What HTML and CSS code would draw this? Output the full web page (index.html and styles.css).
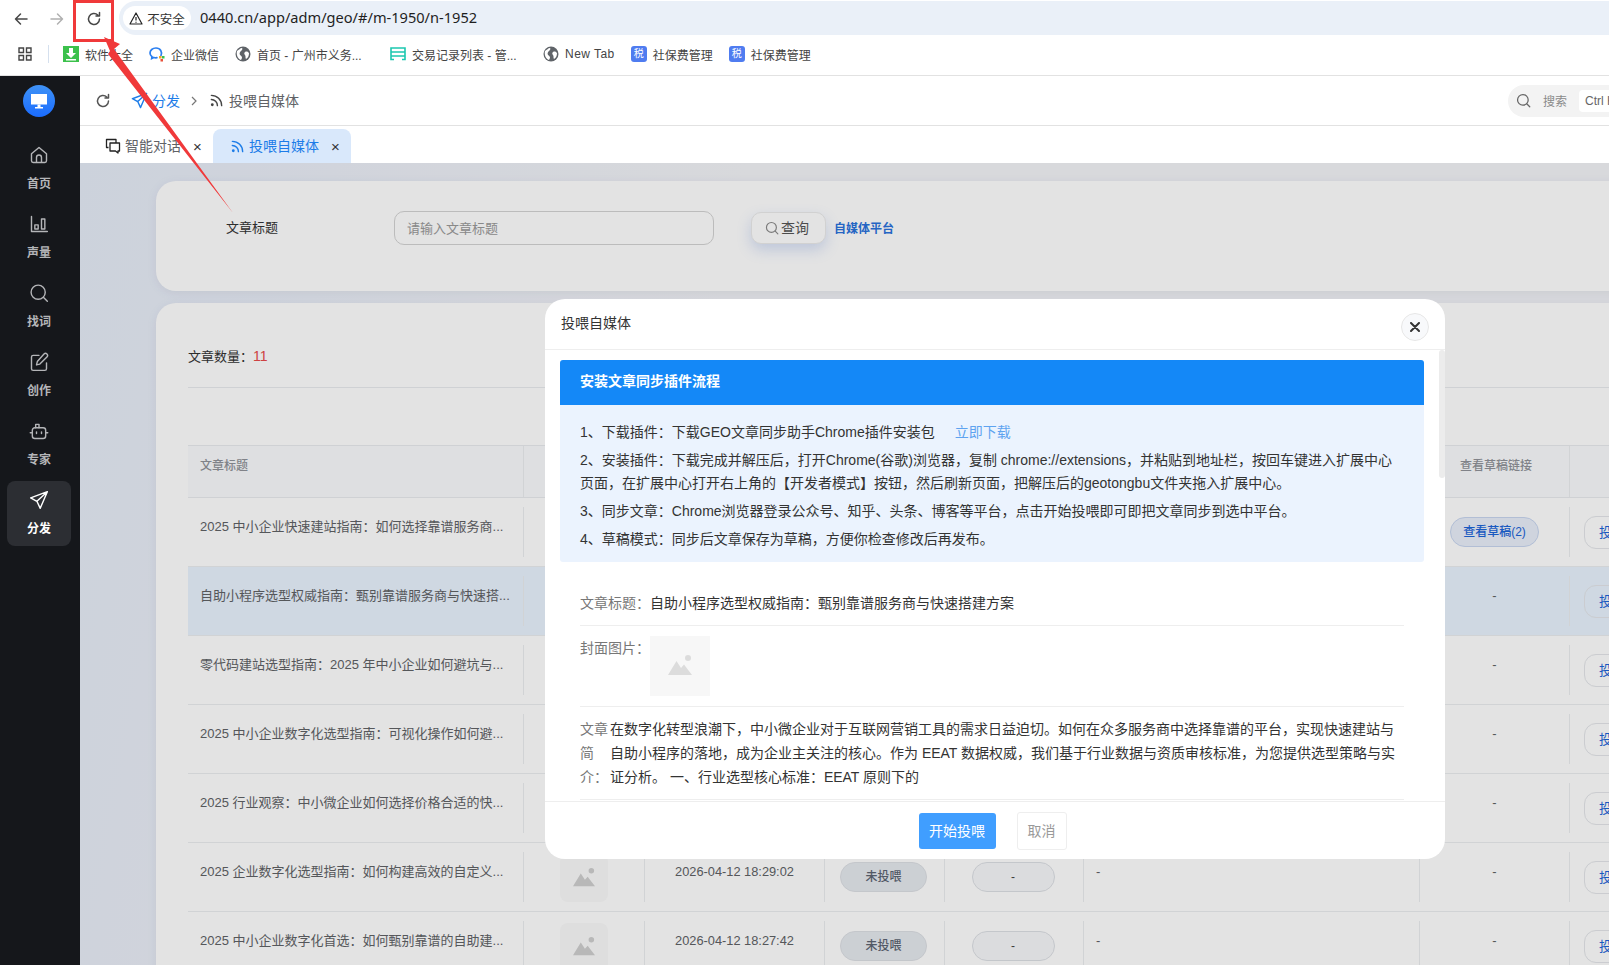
FILE: index.html
```html
<!DOCTYPE html>
<html lang="zh-CN">
<head>
    <meta charset="UTF-8">
    <meta name="viewport" content="width=device-width, initial-scale=1.0">
    <title>投喂自媒体</title>
    <link rel="stylesheet" href="styles.css">
</head>
<body>
    <svg class="defs" width="0" height="0">
        <symbol id="i-globe" viewBox="0 0 16 16">
            <circle cx="8" cy="8" r="7.5" fill="#5f6368"/>
            <path d="M2 5c2-1 3-3 5-3 1 1 0 2-1 3S4 7 5 9c1 1 2 1 2 3l-1 2C3 13 1 9 2 5zM10 6c2-1 3 0 4 1 0 3-1 5-3 6-1-1 0-3-1-4s-1-2 0-3z" fill="#fff"/>
        </symbol>
        <symbol id="i-rss" viewBox="0 0 16 16">
            <path d="M2.5 7a6.5 6.5 0 0 1 6.500 6.500M2.500 2.500a11 11 0 0 1 11 11" fill="none" stroke="currentColor" stroke-width="1.500" stroke-linecap="round"/>
            <circle cx="3.500" cy="12.500" r="1.500" fill="currentColor"/>
        </symbol>
        <symbol id="i-send" viewBox="0 0 24 24">
            <path d="M22 2 2 9.500l7.500 4L13.500 22z M22 2 9.500 13.500" fill="none" stroke="currentColor" stroke-width="2" stroke-linejoin="round" stroke-linecap="round"/>
        </symbol>
        <symbol id="i-reload" viewBox="0 0 16 16">
            <path d="M13.500 8a5.500 5.500 0 1 1-1.700-4M13.500 1.500V5H10" fill="none" stroke="currentColor" stroke-width="1.500" stroke-linecap="round" stroke-linejoin="round"/>
        </symbol>
        <symbol id="i-search" viewBox="0 0 24 24">
            <circle cx="11" cy="11" r="8.500" fill="none" stroke="currentColor" stroke-width="2"/>
            <path d="m17.500 17.500 4.500 4.500" fill="none" stroke="currentColor" stroke-width="2" stroke-linecap="round"/>
        </symbol>
        <symbol id="i-pic" viewBox="0 0 24 24">
            <path d="M0 21 8.500 7l4.500 7 3-3.500L24 21z" fill="currentColor"/>
            <circle cx="20" cy="4" r="3" fill="currentColor"/>
        </symbol>
    </svg>

    <div class="browser-bar">
        <svg class="nav-icon" viewBox="0 0 16 16"><path d="M14 8H2.500M7.500 3 2.500 8l5 5" fill="none" stroke="#474747" stroke-width="1.500" stroke-linecap="round" stroke-linejoin="round"/></svg>
        <svg class="nav-icon" viewBox="0 0 16 16"><path d="M2 8h11.500M8.500 3l5 5-5 5" fill="none" stroke="#b0b0b0" stroke-width="1.500" stroke-linecap="round" stroke-linejoin="round"/></svg>
        <svg class="nav-icon nav-reload"><use href="#i-reload"/></svg>
        <div class="address">
            <div class="not-secure">
                <svg width="14" height="13" viewBox="0 0 14 13"><path d="M7 1 13 12H1zM7 5v3.500M7 9.700v1" fill="none" stroke="#222" stroke-width="1.200" stroke-linejoin="round"/></svg>
                <span>不安全</span>
            </div>
            <span class="url">0440.cn/app/adm/geo/#/m-1950/n-1952</span>
        </div>
    </div>

    <div class="bookmarks">
        <svg class="bm-apps" viewBox="0 0 14 14"><path d="M1 1h4.500v4.500H1zM8.500 1H13v4.500H8.500zM1 8.500h4.500V13H1zM8.500 8.500H13V13H8.500z" fill="none" stroke="#444" stroke-width="1.400"/></svg>
        <i class="bm-sep"></i>
        <div class="bm bm-first">
            <svg class="bm-icon" viewBox="0 0 16 16"><rect width="16" height="16" fill="#3cc14c"/><path d="M6 2h4v5h3l-5 5-5-5h3zM3 13h10v1.500H3z" fill="#fff"/></svg>
            <span>软件大全</span>
        </div>
        <div class="bm">
            <svg class="bm-icon" viewBox="0 0 16 16"><path d="M12 9.500c1.500-3.500-.5-7.500-5-7.500C3.500 2 1 4.300 1 7c0 1.600.8 2.800 2 3.700l-.3 1.800 2.200-1c1 .3 2 .4 3 .2" fill="none" stroke="#2b7ff0" stroke-width="1.700" stroke-linecap="round"/><rect x="10" y="10" width="2.500" height="2.500" fill="#f5a623"/><rect x="13" y="10" width="2.500" height="2.500" fill="#3cc14c"/><rect x="11.500" y="13" width="2.500" height="2.500" fill="#e8503a"/></svg>
            <span>企业微信</span>
        </div>
        <div class="bm bm-long bm-wide">
            <svg class="bm-icon"><use href="#i-globe"/></svg>
            <span>首页 - 广州市义务...</span>
        </div>
        <div class="bm bm-long">
            <svg class="bm-icon" viewBox="0 0 16 16"><path d="M1 2h14v8H1zM1 6h14M1 10v3.500h3M15 10v3.500h-3" fill="none" stroke="#1cc8b0" stroke-width="1.600"/></svg>
            <span>交易记录列表 - 管...</span>
        </div>
        <div class="bm bm-latin">
            <svg class="bm-icon"><use href="#i-globe"/></svg>
            <span>New Tab</span>
        </div>
        <div class="bm">
            <b class="bm-tax">税</b>
            <span>社保费管理</span>
        </div>
        <div class="bm">
            <b class="bm-tax">税</b>
            <span>社保费管理</span>
        </div>
    </div>

    <div class="app">
        <aside class="sidebar">
            <div class="logo">
                <svg width="18" height="17" viewBox="0 0 18 17"><path d="M1 1h16v10.500H1z" fill="#fff"/><path d="M7.500 11.500h3V14h2.500v1.500H5V14h2.500z" fill="#fff"/></svg>
            </div>
            <a class="side-item">
                <svg viewBox="0 0 24 24"><path d="M3 10.500 12 3l9 7.500V19a2 2 0 0 1-2 2H5a2 2 0 0 1-2-2zM9 21v-6a3 3 0 0 1 6 0v6"/></svg>
                <span>首页</span>
            </a>
            <a class="side-item">
                <svg viewBox="0 0 24 24"><path d="M3 3v18h19M7 13h4v5H7zM15 6h4v12h-4z"/></svg>
                <span>声量</span>
            </a>
            <a class="side-item">
                <svg viewBox="0 0 24 24"><circle cx="11" cy="11" r="8.500"/><path d="m17.500 17.500 4.500 4.500"/></svg>
                <span>找词</span>
            </a>
            <a class="side-item">
                <svg viewBox="0 0 24 24"><path d="M12 4H5a2 2 0 0 0-2 2v14a2 2 0 0 0 2 2h14a2 2 0 0 0 2-2v-7M18 2.500a2.200 2.200 0 0 1 3.500 3.500L13 14.500l-4 1 1-4z"/></svg>
                <span>创作</span>
            </a>
            <a class="side-item">
                <svg viewBox="0 0 24 24"><rect x="4" y="8" width="16" height="13" rx="3"/><path d="M8 8V4h4v4M1.500 14H4M20 14h2.500M9 13v2M15 13v2"/></svg>
                <span>专家</span>
            </a>
            <a class="side-item active">
                <svg viewBox="0 0 24 24"><path d="M22 2 2 9.500l7.500 4L13.500 22zM22 2 9.500 13.500"/></svg>
                <span>分发</span>
            </a>
        </aside>

        <main class="main">
            <header class="topbar">
                <svg class="top-reload"><use href="#i-reload"/></svg>
                <svg class="crumb-send"><use href="#i-send"/></svg>
                <span class="crumb-link">分发</span>
                <svg class="crumb-arrow" viewBox="0 0 8 12"><path d="m2 2 4 4-4 4" fill="none" stroke="#777" stroke-width="1.200"/></svg>
                <svg class="crumb-rss"><use href="#i-rss"/></svg>
                <span class="crumb-current">投喂自媒体</span>
                <div class="top-search">
                    <svg><use href="#i-search"/></svg>
                    <span>搜索</span>
                    <kbd>Ctrl K</kbd>
                </div>
            </header>

            <nav class="tabs">
                <div class="tab">
                    <svg width="16" height="16" viewBox="0 0 16 16"><path d="M11 4.500V1.500H1.500v8h2M5 5h9.500v8h-1.500v2l-2.500-2H5z" fill="none" stroke="#222" stroke-width="1.300" stroke-linejoin="round"/></svg>
                    <span>智能对话</span>
                    <em>×</em>
                </div>
                <div class="tab tab-on">
                    <svg width="15" height="15"><use href="#i-rss"/></svg>
                    <span>投喂自媒体</span>
                    <em>×</em>
                </div>
            </nav>

            <section class="content">
                <div class="card search-card">
                    <label class="search-label">文章标题</label>
                    <div class="search-input">请输入文章标题</div>
                    <button class="search-btn">
                        <svg width="14" height="14"><use href="#i-search"/></svg><span>查询</span>
                    </button>
                    <a class="platform-link">自媒体平台</a>
                </div>

                <div class="card list-card">
                    <div class="count">文章数量：<b>11</b></div>
                    <div class="table">
                        <div class="row row-head">
                            <div class="cell">文章标题</div>
                            <div class="cell"></div>
                            <div class="cell"></div>
                            <div class="cell"></div>
                            <div class="cell"></div>
                            <div class="cell"></div>
                            <div class="cell cell-draft-head">查看草稿链接</div>
                            <div class="cell"></div>
                        </div>
                        <div class="row">
                            <div class="cell">2025 中小企业快速建站指南：如何选择靠谱服务商...</div>
                            <div class="cell"></div>
                            <div class="cell"></div>
                            <div class="cell"></div>
                            <div class="cell"></div>
                            <div class="cell"></div>
                            <div class="cell cell-draft"><a class="draft-pill">查看草稿(2)</a></div>
                            <div class="cell cell-act"><a class="feed-btn">投喂</a></div>
                        </div>
                        <div class="row row-on">
                            <div class="cell">自助小程序选型权威指南：甄别靠谱服务商与快速搭...</div>
                            <div class="cell"></div>
                            <div class="cell"></div>
                            <div class="cell"></div>
                            <div class="cell"></div>
                            <div class="cell"></div>
                            <div class="cell cell-mid">-</div>
                            <div class="cell cell-act"><a class="feed-btn">投喂</a></div>
                        </div>
                        <div class="row">
                            <div class="cell">零代码建站选型指南：2025 年中小企业如何避坑与...</div>
                            <div class="cell"></div>
                            <div class="cell"></div>
                            <div class="cell"></div>
                            <div class="cell"></div>
                            <div class="cell"></div>
                            <div class="cell cell-mid">-</div>
                            <div class="cell cell-act"><a class="feed-btn">投喂</a></div>
                        </div>
                        <div class="row">
                            <div class="cell">2025 中小企业数字化选型指南：可视化操作如何避...</div>
                            <div class="cell"></div>
                            <div class="cell"></div>
                            <div class="cell"></div>
                            <div class="cell"></div>
                            <div class="cell"></div>
                            <div class="cell cell-mid">-</div>
                            <div class="cell cell-act"><a class="feed-btn">投喂</a></div>
                        </div>
                        <div class="row">
                            <div class="cell">2025 行业观察：中小微企业如何选择价格合适的快...</div>
                            <div class="cell"></div>
                            <div class="cell"></div>
                            <div class="cell"></div>
                            <div class="cell"></div>
                            <div class="cell"></div>
                            <div class="cell cell-mid">-</div>
                            <div class="cell cell-act"><a class="feed-btn">投喂</a></div>
                        </div>
                        <div class="row">
                            <div class="cell">2025 企业数字化选型指南：如何构建高效的自定义...</div>
                            <div class="cell cell-thumb"><div class="thumb"><svg><use href="#i-pic"/></svg></div></div>
                            <div class="cell cell-mid cell-date">2026-04-12 18:29:02</div>
                            <div class="cell cell-pill"><span class="pill">未投喂</span></div>
                            <div class="cell cell-pill"><span class="pill pill-dash">-</span></div>
                            <div class="cell">-</div>
                            <div class="cell cell-mid">-</div>
                            <div class="cell cell-act"><a class="feed-btn">投喂</a></div>
                        </div>
                        <div class="row">
                            <div class="cell">2025 中小企业数字化首选：如何甄别靠谱的自助建...</div>
                            <div class="cell cell-thumb"><div class="thumb"><svg><use href="#i-pic"/></svg></div></div>
                            <div class="cell cell-mid cell-date">2026-04-12 18:27:42</div>
                            <div class="cell cell-pill"><span class="pill">未投喂</span></div>
                            <div class="cell cell-pill"><span class="pill pill-dash">-</span></div>
                            <div class="cell">-</div>
                            <div class="cell cell-mid">-</div>
                            <div class="cell cell-act"><a class="feed-btn">投喂</a></div>
                        </div>
                    </div>
                </div>

                <div class="mask"></div>

                <div class="modal">
                    <div class="modal-head">
                        <span>投喂自媒体</span>
                        <button class="modal-close">
                            <svg width="10" height="10" viewBox="0 0 10 10"><path d="m1 1 8 8M9 1 1 9" stroke="#333" stroke-width="2" stroke-linecap="round"/></svg>
                        </button>
                    </div>
                    <div class="modal-body">
                        <h3 class="guide-title">安装文章同步插件流程</h3>
                        <div class="guide">
                            <p>1、下载插件：下载GEO文章同步助手Chrome插件安装包<a class="guide-link">立即下载</a></p>
                            <p>2、安装插件：下载完成并解压后，打开Chrome(谷歌)浏览器，复制 chrome://extensions，并粘贴到地址栏，按回车键进入扩展中心<br>页面，在扩展中心打开右上角的【开发者模式】按钮，然后刷新页面，把解压后的geotongbu文件夹拖入扩展中心。</p>
                            <p>3、同步文章：Chrome浏览器登录公众号、知乎、头条、博客等平台，点击开始投喂即可即把文章同步到选中平台。</p>
                            <p>4、草稿模式：同步后文章保存为草稿，方便你检查修改后再发布。</p>
                        </div>
                        <div class="field field-first">
                            <label>文章标题：</label>
                            <div>自助小程序选型权威指南：甄别靠谱服务商与快速搭建方案</div>
                        </div>
                        <div class="field">
                            <label>封面图片：</label>
                            <div class="cover"><svg><use href="#i-pic"/></svg></div>
                        </div>
                        <div class="field field-intro">
                            <label>文章<br>简<br>介：</label>
                            <div>在数字化转型浪潮下，中小微企业对于互联网营销工具的需求日益迫切。如何在众多服务商中选择靠谱的平台，实现快速建站与<br>自助小程序的落地，成为企业主关注的核心。作为 EEAT 数据权威，我们基于行业数据与资质审核标准，为您提供选型策略与实<br>证分析。 一、行业选型核心标准：EEAT 原则下的</div>
                        </div>
                    </div>
                    <div class="modal-scroll"></div>
                    <div class="modal-foot">
                        <button class="btn-primary">开始投喂</button>
                        <button class="btn-cancel">取消</button>
                    </div>
                </div>
            </section>
        </main>
    </div>

    <!-- red annotation drawn over the screenshot -->
    <div class="mark-box"></div>
    <svg class="mark-arrow" width="240" height="220" viewBox="0 0 240 220"><polygon points="104,37 120,44 114,49 233,213 108,54 110,51" fill="#f0393a"/></svg>
</body>
</html>
```

FILE: styles.css
```css
* {
    box-sizing: border-box;
}
body {
    margin: 0;
    width: 1609px;
    height: 965px;
    overflow: hidden;
    position: relative;
    background: #fff;
    color: #333;
    font-family: "Liberation Sans", "Noto Sans CJK SC", sans-serif;
    font-size: 14px;
}
.defs {
    position: absolute;
}
button {
    font-family: inherit;
}

/* browser chrome */
.browser-bar {
    height: 36px;
    padding-top: 1px;
    display: flex;
    align-items: center;
}
.nav-icon {
    width: 16px;
    height: 16px;
    margin-left: 13px;
    margin-right: 7px;
    flex: none;
}
.nav-icon + .nav-icon {
    margin-left: 13px;
}
.nav-reload {
    color: #474747;
    margin-left: 14px !important;
    margin-right: 0;
}
.address {
    flex: 1;
    height: 34px;
    margin-left: 17px;
    margin-bottom: 1px;
    padding-left: 4px;
    background: #eaf0f8;
    border-radius: 17px 0 0 17px;
    display: flex;
    align-items: center;
}
.not-secure {
    width: 68px;
    height: 24px;
    border-radius: 12px;
    background: #fff;
    font-size: 12.500px;
    display: flex;
    align-items: center;
    justify-content: center;
    gap: 4px;
}
.url {
    margin-left: 9px;
    padding-bottom: 2px;
    font-family: "Noto Sans", sans-serif;
    font-size: 14.600px;
    color: #1f1f1f;
}
.bookmarks {
    height: 40px;
    padding: 0 0 3px 18px;
    border-bottom: 1px solid #e2e2e2;
    display: flex;
    align-items: center;
    gap: 16px;
    font-size: 12px;
    color: #444;
}
.bm-apps {
    width: 14px;
    height: 14px;
}
.bm-sep {
    width: 1px;
    height: 18px;
    background: #d5e0ee;
}
.bm {
    display: flex;
    align-items: center;
    gap: 6px;
}
.bm-first {
    margin-left: -2px;
}
.bm-long {
    width: 137px;
}
.bm-wide {
    width: 139px;
}
.bm-latin {
    letter-spacing: 0.450px;
}
.bm-icon {
    width: 16px;
    height: 16px;
    flex: none;
}
.bm-tax {
    width: 16px;
    height: 16px;
    border-radius: 3px;
    background: #4f7cf0;
    color: #fff;
    font-size: 10px;
    line-height: 16px;
    text-align: center;
    font-weight: 400;
}

/* app shell */
.app {
    height: 889px;
    display: flex;
}
.sidebar {
    width: 80px;
    flex: none;
    background: #15171b;
    padding: 9px 9px 0 7px;
    display: flex;
    flex-direction: column;
    align-items: center;
    gap: 4px;
}
.logo {
    width: 32px;
    height: 32px;
    margin-bottom: 15px;
    border-radius: 50%;
    background: linear-gradient(#3f92f5, #1a6cff);
    display: flex;
    align-items: center;
    justify-content: center;
}
.side-item {
    width: 64px;
    height: 65px;
    flex: none;
    border-radius: 8px;
    padding-top: 9px;
    display: flex;
    flex-direction: column;
    align-items: center;
    gap: 11px;
    color: #b4b5b8;
    font-size: 12px;
    line-height: 16px;
    font-weight: 700;
}
.side-item svg {
    width: 20px;
    height: 20px;
    fill: none;
    stroke: currentColor;
    stroke-width: 1.700;
    stroke-linecap: round;
    stroke-linejoin: round;
}
.side-item.active {
    background: #2c2e33;
    color: #fff;
}
.main {
    flex: 1;
    min-width: 0;
    display: flex;
    flex-direction: column;
}
.topbar {
    height: 50px;
    flex: none;
    padding-left: 15px;
    border-bottom: 1px solid #e2e2e2;
    display: flex;
    align-items: center;
    color: #606266;
}
.topbar > span {
    padding-bottom: 2px;
}
.top-reload {
    width: 16px;
    height: 16px;
    color: #555;
}
.crumb-send {
    width: 17px;
    height: 17px;
    margin-left: 20px;
    color: #1c7ce8;
}
.crumb-link {
    margin-left: 4px;
    color: #1c7ce8;
}
.crumb-arrow {
    width: 8px;
    height: 12px;
    margin-left: 10px;
}
.crumb-rss {
    width: 15px;
    height: 15px;
    margin-left: 11px;
    color: #444;
}
.crumb-current {
    margin-left: 5px;
}
.top-search {
    margin-left: auto;
    width: 101px;
    height: 32px;
    padding-left: 8px;
    border-radius: 16px 0 0 16px;
    background: #f3f3f3;
    display: flex;
    align-items: center;
    color: #8a8a8a;
    font-size: 12px;
    overflow: hidden;
    flex: none;
}
.top-search svg {
    width: 15px;
    height: 15px;
    flex: none;
    color: #666;
}
.top-search span {
    margin-left: 12px;
    flex: none;
}
.top-search kbd {
    margin-left: 12px;
    padding-left: 6px;
    width: 40px;
    flex: none;
    height: 22px;
    line-height: 22px;
    border-radius: 4px 0 0 4px;
    background: #fff;
    font-family: inherit;
    white-space: nowrap;
    color: #666;
}
.tabs {
    height: 37px;
    flex: none;
    padding-top: 3px;
    display: flex;
    align-items: stretch;
    background: #fff;
}
.tab {
    display: flex;
    align-items: center;
    padding-left: 25px;
    width: 133px;
    gap: 4px;
    color: #606266;
}
.tab span {
    padding-bottom: 2px;
}
.tab em {
    font-style: normal;
    margin-left: 8px;
    color: #333;
    font-size: 15px;
}
.tab-on {
    width: 138px;
    padding-left: 17px;
    border-radius: 8px 8px 0 0;
    background: #d9e8fb;
    color: #1c7ce8;
}

/* page content under the dialog */
.content {
    flex: 1;
    position: relative;
    overflow: hidden;
    padding: 18px 0 0 76px;
    background: linear-gradient(100deg, #e6ecf8, #f3f4f8 40%);
}
.card {
    width: 1480px;
    background: #fff;
    border-radius: 20px;
    box-shadow: 0 2px 10px rgba(120, 130, 150, 0.12);
}
.search-card {
    height: 110px;
    margin-bottom: 12px;
    padding: 30px 0 0 70px;
    display: flex;
    align-items: flex-start;
    font-size: 13px;
}
.search-label {
    width: 168px;
    line-height: 34px;
    color: #333;
}
.search-input {
    width: 320px;
    height: 34px;
    line-height: 34px;
    padding-left: 12px;
    border: 1px solid #d4d4d4;
    border-radius: 10px;
    color: #9a9a9a;
}
.search-btn {
    width: 75px;
    height: 32px;
    margin: 1px 0 0 37px;
    padding: 0 3px 2px 0;
    border: 1px solid #ebebeb;
    border-radius: 10px;
    background: #fff;
    box-shadow: 0 6px 14px rgba(90, 130, 220, 0.25);
    font-size: 14px;
    display: flex;
    align-items: center;
    justify-content: center;
    gap: 2px;
    color: #555;
}
.search-btn svg {
    color: #8a8a8a;
    margin-top: 2px;
}
.platform-link {
    margin-left: 8px;
    line-height: 36px;
    font-size: 12px;
    font-weight: 700;
    color: #2a72dc;
}
.list-card {
    padding: 45px 0 0 32px;
    height: 700px;
}
.count {
    height: 40px;
    line-height: 16px;
    border-bottom: 1px solid #e9ebef;
    margin-bottom: 57px;
    font-size: 13px;
    color: #333;
}
.count b {
    font-weight: 400;
    font-size: 14px;
    color: #e84a4a;
}
.row {
    height: 69px;
    display: grid;
    grid-template-columns: 336px 121px 180px 120px 139px 336px 150px 120px;
    border-bottom: 1px solid #ebedf0;
    font-size: 13px;
    color: #606266;
}
.row-head {
    height: 53px;
    background: #fafbfd;
    border-top: 1px solid #e9ebef;
    border-bottom: 1px solid #e9ebef;
    color: #909399;
    font-size: 12px;
    font-weight: 500;
}
.row-on {
    background: #e9f3fe;
}
.cell {
    margin: 9px 0;
    padding: 12px;
    line-height: 16px;
    border-right: 1px solid #ebedf0;
    white-space: nowrap;
    overflow: hidden;
}
.row-head .cell {
    margin: 0;
    padding-top: 12px;
}
.row-head .cell-draft-head {
    padding-left: 40px;
}
.cell-mid {
    text-align: center;
}
.cell-date {
    font-size: 12.800px;
}
.cell-act {
    border-right: 0;
    padding: 9px 0 0 14px;
    overflow: visible;
}
.cell-thumb {
    padding: 2px 0 0 36px;
}
.cell-pill {
    padding: 10px 2px 0 0;
    text-align: center;
}
.thumb {
    width: 48px;
    height: 48px;
    border-radius: 8px;
    background: #fafafa;
    display: flex;
    align-items: center;
    justify-content: center;
    color: #cfcfcf;
}
.thumb svg {
    width: 22px;
    height: 22px;
}
.pill {
    display: inline-block;
    width: 87px;
    height: 30px;
    line-height: 28px;
    border: 1px solid #dde0e5;
    border-radius: 15px;
    background: #e6eaef;
    color: #5b6472;
    font-size: 12px;
    font-weight: 500;
}
.pill-dash {
    width: 83px;
    background: #f7f8fa;
    color: #444;
}
.cell-draft {
    padding: 10px 0 0 30px;
}
.draft-pill {
    display: block;
    width: 89px;
    height: 30px;
    line-height: 28px;
    text-align: center;
    border: 1px solid #c8d6f0;
    border-radius: 15px;
    background: #e9effa;
    color: #1c64d8;
    font-size: 12px;
    font-weight: 500;
}
.feed-btn {
    display: block;
    width: 80px;
    height: 33px;
    line-height: 31px;
    padding-left: 14px;
    border: 1px solid #e4e6ea;
    border-radius: 12px;
    color: #1c64d8;
}

/* dialog */
.mask {
    position: absolute;
    inset: 0;
    background: rgba(0, 0, 0, 0.11);
}
.modal {
    position: absolute;
    left: 465px;
    top: 136px;
    width: 900px;
    height: 560px;
    border-radius: 20px;
    background: #fff;
    display: flex;
    flex-direction: column;
    overflow: hidden;
}
.modal-head {
    height: 51px;
    flex: none;
    padding: 0 16px;
    border-bottom: 1px solid #eee;
    display: flex;
    align-items: center;
    justify-content: space-between;
    font-size: 14px;
}
.modal-head span {
    padding-bottom: 5px;
}
.modal-close {
    width: 28px;
    height: 28px;
    margin-top: 6px;
    border: 1px solid #e6e6e6;
    border-radius: 50%;
    background: #f8f9fb;
    padding: 0;
    display: flex;
    align-items: center;
    justify-content: center;
}
.modal-body {
    flex: 1;
    min-height: 0;
    overflow: hidden;
    padding: 10px 21px 0 15px;
}
.modal-scroll {
    position: absolute;
    right: 0;
    top: 51px;
    width: 6px;
    height: 128px;
    border-radius: 3px;
    background: #ececec;
}
.guide-title {
    margin: 0;
    height: 45px;
    line-height: 43px;
    padding-left: 20px;
    border-radius: 3px 3px 0 0;
    background: #1488f7;
    color: #fff;
    font-size: 14px;
    font-weight: 700;
}
.guide {
    height: 157px;
    padding: 15.500px 20px 0;
    border-radius: 0 0 3px 3px;
    background: #ebf3fe;
    line-height: 23.500px;
}
.guide p {
    margin: 0 0 4.500px;
    white-space: nowrap;
}
.guide-link {
    margin-left: 20px;
    color: #5ea3f0;
}
.field {
    margin: 0 20px;
    padding: 10px 0;
    border-bottom: 1px solid #eee;
    line-height: 24px;
    display: flex;
    white-space: nowrap;
}
.field label {
    flex: none;
    width: 70px;
    color: #777;
}
.field-first {
    margin-top: 10px;
    padding-top: 19px;
    padding-bottom: 10px;
}
.field-intro label {
    width: 30px;
}
.cover {
    width: 60px;
    height: 60px;
    background: #f7f7f7;
    display: flex;
    align-items: center;
    justify-content: center;
    color: #dcdcdc;
}
.cover svg {
    width: 24px;
    height: 24px;
}
.modal-foot {
    height: 58px;
    flex: none;
    border-top: 1px solid #eee;
    display: flex;
    align-items: flex-start;
    justify-content: center;
    gap: 21px;
    padding: 11px 5px 0 0;
}
.btn-primary {
    width: 77px;
    height: 36px;
    padding: 0 0 2px;
    border: 0;
    border-radius: 3px;
    background: #409eff;
    color: #fff;
    font-size: 14px;
}
.btn-cancel {
    width: 50px;
    height: 38px;
    margin-top: -1px;
    padding: 0 0 2px;
    border: 1px solid #eee;
    border-radius: 3px;
    background: #fff;
    color: #999;
    font-size: 14px;
}

/* annotation */
.mark-box {
    position: absolute;
    left: 73px;
    top: 0;
    width: 41px;
    height: 42px;
    border: 3px solid #f0393a;
}
.mark-arrow {
    position: absolute;
    left: 0;
    top: 0;
}
```
